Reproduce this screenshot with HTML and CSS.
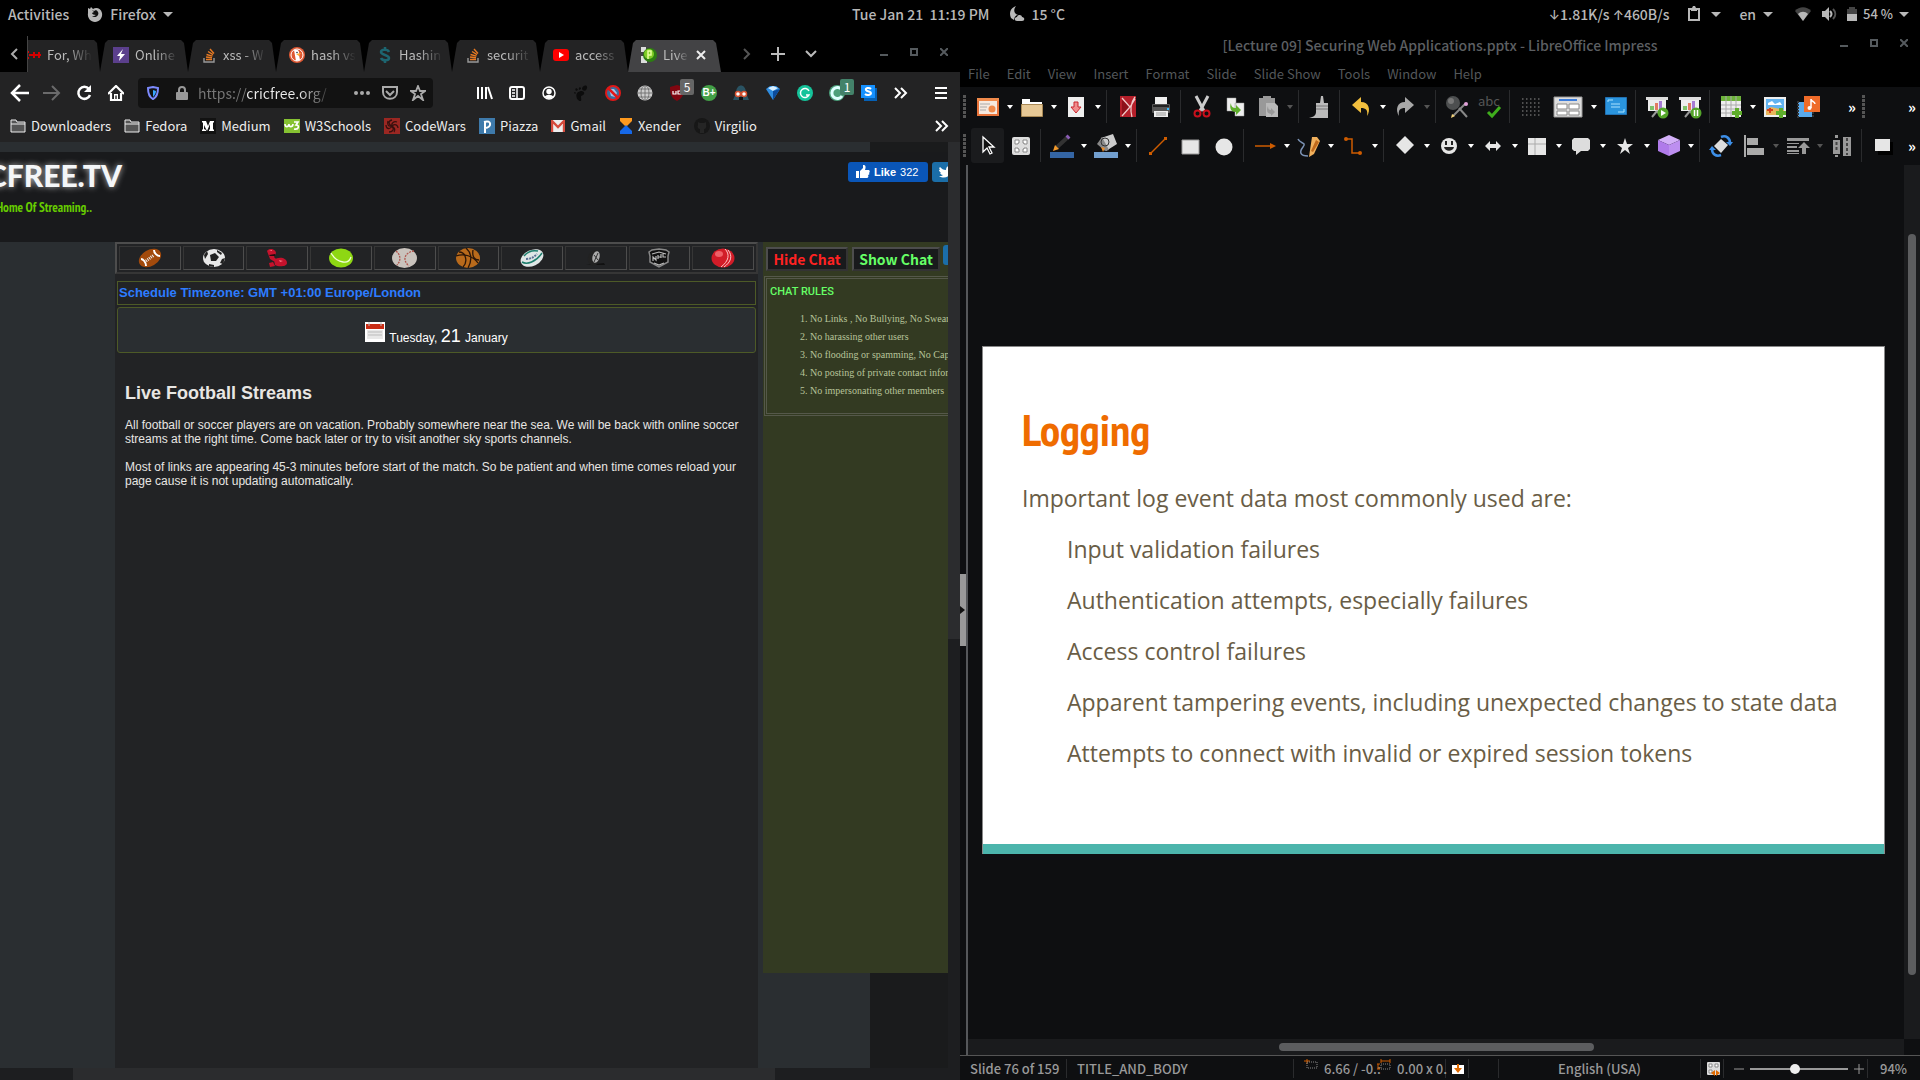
FILE: index.html
```html
<!DOCTYPE html>
<html lang="en">
<head>
<meta charset="utf-8">
<title>Desktop</title>
<link rel="stylesheet" href="styles.css">
</head>
<body>
<header class="panel">
  <div class="panel-side">
    <button class="panel-btn">Activities</button>
    <button class="panel-btn app-menu"><svg width="16" height="16" viewBox="0 0 16 16"><path fill="#b8b8b8" d="M1 2l2 1 1-2 2 2c3-2 8-1 9 4 1 5-3 9-7 9S0 12 1 7z"/><path fill="#111" d="M5 4c1 0 1 1 2 1l2-1c2 1 3 3 2 5s-4 3-6 1l2 0c1 0 1-1 2-1-2 0-4-1-4-2l2-1z"/></svg>Firefox<i class="tri"></i></button>
  </div>
  <div class="panel-mid"><span>Tue Jan 21 &nbsp;11:19 PM</span><svg width="16" height="16" viewBox="0 0 16 16"><path fill="#b8b8b8" d="M5 1C1 3 0 8 2 12l3 2c0-3 2-5 4-5C5 8 4 4 7 0zM8 15c-3 0-3-4 0-4 1-3 5-2 5 0 3 0 3 4 0 4z"/></svg><span class="temp">15 °C</span></div>
  <div class="panel-side panel-right">
    <span><span class="arrow">↓</span>1.81K/s <span class="arrow">↑</span>460B/s</span>
    <button class="panel-btn clip"><svg width="14" height="16" viewBox="0 0 14 16"><path fill="none" stroke="#b8b8b8" stroke-width="2" d="M2 3h10v11H2z"/><path fill="#b8b8b8" d="M4 2h1l1-2h2l1 2h1v3H4z"/></svg><i class="tri"></i></button>
    <button class="panel-btn lang">en<i class="tri"></i></button>
    <button class="panel-btn sys"><svg width="16" height="14" viewBox="0 0 16 14"><path fill="#444" d="M0 4c4-5 12-5 16 0l-8 10z"/><path fill="#b8b8b8" d="M3 7c3-3 7-3 10 0l-5 7z"/></svg><svg width="16" height="14" viewBox="0 0 16 14"><path fill="#b8b8b8" d="M1 4h3l4-4v14l-4-4H1z"/><path fill="none" stroke="#b8b8b8" stroke-width="2" d="M9 4c2 2 2 4 0 6"/><path fill="none" stroke="#555" stroke-width="2" d="M12 2c3 3 3 7 0 10"/></svg><svg width="10" height="14" viewBox="0 0 10 14"><path fill="#444" d="M2 0h6v2h2v5H0V2h2z"/><path fill="#b8b8b8" d="M0 7h10v7H0z"/></svg><span>54 %</span><i class="tri"></i></button>
  </div>
</header>

<main class="desk">
<section class="browser" aria-label="Firefox">
  <div class="tabbar">
    <button class="tab-scroll" aria-label="Scroll left"><svg width="8" height="12" viewBox="0 0 8 12"><path d="M7 1L2 6l5 5" fill="none" stroke="#aaa" stroke-width="2"/></svg></button>
    <div class="tabs">
      <button class="tab tab-cut"><svg width="14" height="16" viewBox="0 0 14 16"><path stroke="#d40000" stroke-width="2" d="M3 8h10M6 5v6M11 5v6M0 4v2M0 10v2M2 7v2"/></svg><span>For, Wh</span></button>
      <button class="tab"><svg width="16" height="16" viewBox="0 0 16 16"><path fill="#5b3f8c" d="M0 0h16v16H0z"/><path fill="#fff" d="M10 2L4 9h3l-1 5 6-7H8z"/></svg><span>Online</span></button>
      <button class="tab"><svg width="16" height="16" viewBox="0 0 16 16"><path fill="none" stroke="#999" stroke-width="1.4" d="M3 11v4h10v-4"/><path stroke="#e87a22" stroke-width="1.4" d="M5 12.500h6M5 10l6 .7M5.500 7.500l6 1.700M7 4.500l5 3.200M9 2l4 4.500"/></svg><span>xss - W</span></button>
      <button class="tab"><svg width="16" height="16" viewBox="0 0 16 16"><circle cx="8" cy="8" r="8" fill="#de5833"/><circle cx="8" cy="8" r="6" fill="none" stroke="#fff"/><path fill="#fff" d="M5 3c4-1 6 1 5 5l1 5-4 1z"/><path fill="#fa3" d="M7 7l5-1-2 3z"/><circle cx="8" cy="5.500" r=".8" fill="#234"/></svg><span>hash vs</span></button>
      <button class="tab"><svg width="16" height="16" viewBox="0 0 16 16"><path fill="none" stroke="#1d6570" stroke-width="2.500" d="M12 5C11 2 4 2 4 5s8 3 8 6-7 3-8 0M8 0v3M8 13v3"/></svg><span>Hashin</span></button>
      <button class="tab"><svg width="16" height="16" viewBox="0 0 16 16"><path fill="none" stroke="#999" stroke-width="1.400" d="M3 11v4h10v-4"/><path stroke="#e87a22" stroke-width="1.400" d="M5 12.500h6M5 10l6 .7M5.500 7.500l6 1.700M7 4.500l5 3.200M9 2l4 4.500"/></svg><span>securit</span></button>
      <button class="tab"><svg width="16" height="16" viewBox="0 0 16 16"><rect y="2" width="16" height="12" rx="3" fill="#f00"/><path fill="#fff" d="M6 5l5 3-5 3z"/></svg><span>access</span></button>
      <button class="tab tab-on"><svg width="16" height="16" viewBox="0 0 16 16"><path fill="#ddd" d="M0 0h5v5H0zM0 9h6v7H0z"/><circle cx="9" cy="8" r="7" fill="#2d7d12"/><circle cx="8" cy="7" r="5" fill="#7ecb26"/><path fill="none" stroke="#e6ff9c" stroke-width="1.500" d="M7 12V4h3v4H7"/></svg><span>Live</span><svg class="x" width="10" height="10" viewBox="0 0 10 10"><path d="M1 1l8 8M9 1L1 9" stroke="#eee" stroke-width="2"/></svg></button>
    </div>
    <div class="tab-tools">
      <svg width="8" height="12" viewBox="0 0 8 12"><path d="M1 1l5 5-5 5" fill="none" stroke="#555" stroke-width="2"/></svg>
      <svg width="14" height="14" viewBox="0 0 14 14"><path d="M7 0v14M0 7h14" stroke="#bbb" stroke-width="2"/></svg>
      <svg width="12" height="8" viewBox="0 0 12 8"><path d="M1 1l5 5 5-5" fill="none" stroke="#bbb" stroke-width="2"/></svg>
    </div>
    <div class="wm">
      <svg width="8" height="8" viewBox="0 0 8 8"><path d="M0 7h8" stroke="#555a5e" stroke-width="2"/></svg>
      <svg width="8" height="8" viewBox="0 0 8 8"><path d="M1 1h6v6H1z" fill="none" stroke="#555a5e" stroke-width="2"/></svg>
      <svg width="8" height="8" viewBox="0 0 8 8"><path d="M0 0l8 8M8 0L0 8" stroke="#555a5e" stroke-width="2"/></svg>
    </div>
  </div>

  <div class="navbar">
    <button class="nb" aria-label="Back"><svg width="20" height="18" viewBox="0 0 20 18"><path d="M19 9H3M10 1L2 9l8 8" fill="none" stroke="#fff" stroke-width="2.500"/></svg></button>
    <button class="nb" aria-label="Forward"><svg width="18" height="16" viewBox="0 0 18 16"><path d="M0 8h16M9 1l7 7-7 7" fill="none" stroke="#6a6a6b" stroke-width="2"/></svg></button>
    <button class="nb" aria-label="Reload"><svg width="16" height="16" viewBox="0 0 16 16"><path d="M13 4a6 6 0 1 0 1 6" fill="none" stroke="#fff" stroke-width="2.500"/><path fill="#fff" d="M15 0v7H8z"/></svg></button>
    <button class="nb" aria-label="Home"><svg width="16" height="16" viewBox="0 0 16 16"><path d="M0 9l8-8 8 8M3 8v7h10V8" fill="none" stroke="#fff" stroke-width="2.200"/><path fill="#fff" d="M6 9h4v6H6z"/><path fill="#222" d="M7.300 10.500h1.400V14H7.300z"/></svg></button>
    <div class="urlbox">
      <svg width="12" height="14" viewBox="0 0 12 14"><path d="M1 2l5-1 5 1c0 6-1 9-5 11C2 11 1 8 1 2z" fill="none" stroke="#7d8bff" stroke-width="2"/><path fill="#38a6ff" d="M6 4v7c2-2 3-4 3-6z"/></svg>
      <svg class="lock" width="12" height="14" viewBox="0 0 12 14"><rect y="6" width="12" height="8" rx="1" fill="#999"/><path d="M3 7V4a3 3 0 0 1 6 0v3" fill="none" stroke="#999" stroke-width="2"/></svg>
      <input class="url" aria-label="Address" value="https://cricfree.org/">
      <svg width="16" height="4" viewBox="0 0 16 4"><circle cx="2" cy="2" r="2" fill="#aaa"/><circle cx="8" cy="2" r="2" fill="#aaa"/><circle cx="14" cy="2" r="2" fill="#aaa"/></svg>
      <svg width="16" height="14" viewBox="0 0 16 14"><path d="M1 1h14v5c0 9-14 9-14 0z" fill="none" stroke="#aaa" stroke-width="2"/><path d="M4 5l4 4 4-4" fill="none" stroke="#aaa" stroke-width="2"/></svg>
      <svg width="16" height="16" viewBox="0 0 16 16"><path d="M8 1l2 5h5l-4 3 2 6-5-4-5 4 2-6-4-3h5z" fill="none" stroke="#aaa" stroke-width="1.800"/></svg>
    </div>
    <button class="nb" aria-label="Library"><svg width="16" height="16" viewBox="0 0 16 16"><path d="M1 2v12M5 2v12M9 2v12M11 2l4 12" stroke="#fff" stroke-width="2"/></svg></button>
    <button class="nb" aria-label="Sidebar"><svg width="16" height="14" viewBox="0 0 16 14"><rect x="1" y="1" width="14" height="12" rx="2" fill="none" stroke="#fff" stroke-width="2"/><path d="M8 1v12M3 4h3M3 7h3M3 10h3" stroke="#fff" stroke-width="1.500"/></svg></button>
    <button class="nb" aria-label="Account"><svg width="14" height="14" viewBox="0 0 14 14"><circle cx="7" cy="7" r="6" fill="none" stroke="#fff" stroke-width="1.500"/><circle cx="7" cy="5.500" r="2.700" fill="#fff"/><path fill="#fff" d="M2.500 11c2-3 7-3 9 0l-4.500 2z"/></svg></button>
    <button class="nb" aria-label="GNOME"><svg width="14" height="16" viewBox="0 0 14 16"><path fill="#0c0c0c" d="M3 8c5-4 8-1 7 1s-3 1-3 3 1 4-1 4-5-4-3-8zM8 4c0-4 6-5 5-1s-4 3-5 1zM5 5c-1-3 2-4 2-1zM2 6c-2-3 1-4 2-1zM1 9c-2-2 0-3 1-1z"/></svg></button>
    <button class="nb" aria-label="Blocker"><svg width="16" height="16" viewBox="0 0 16 16"><circle cx="8" cy="8" r="7" fill="#3b6d9c"/><path fill="#9fc4e8" d="M4 4h5l3 4-2 4-4-1z"/><circle cx="8" cy="8" r="7" fill="none" stroke="#e01818" stroke-width="2"/><path d="M3 3l10 10" stroke="#e01818" stroke-width="2.500"/></svg></button>
    <button class="nb" aria-label="Globe"><svg width="16" height="16" viewBox="0 0 16 16"><circle cx="8" cy="8" r="7.500" fill="#ccc"/><path d="M8 0v16M0 8h16M2 4h12M2 12h12" stroke="#666" stroke-width=".8"/><ellipse cx="8" cy="8" rx="4" ry="7.500" fill="none" stroke="#666" stroke-width=".8"/></svg></button>
    <button class="nb" aria-label="uBlock"><svg width="16" height="16" viewBox="0 0 16 16"><path fill="#800610" d="M8 0l7 2c0 7-1 11-7 14C2 13 1 9 1 2z"/><path d="M4 6v3h3V6M9 6h3v3H9z" fill="none" stroke="#fff" stroke-width="1.200"/></svg><b class="badge">5</b></button>
    <button class="nb" aria-label="Boost"><span class="round green">B+</span></button>
    <button class="nb" aria-label="Vader"><svg width="16" height="16" viewBox="0 0 16 16"><path fill="#2a5363" d="M3 8c0-10 10-10 10 0l3 7H0z"/><circle cx="5" cy="9" r="2.500" fill="#fff" stroke="#d4502f" stroke-width="1.500"/><circle cx="11" cy="9" r="2.500" fill="#fff" stroke="#d4502f" stroke-width="1.500"/><path fill="#111" d="M6 12h4v3H6z"/></svg></button>
    <button class="nb" aria-label="Gem"><svg width="14" height="16" viewBox="0 0 14 16"><path fill="#2f8de0" d="M0 4l4-3h6l4 3-7 11z"/><path fill="#d8efff" d="M2 3l5-2 5 2-5 3z"/><path fill="#0c4c9c" d="M7 6l7-2-7 11z"/></svg></button>
    <button class="nb" aria-label="Grammarly"><svg width="16" height="16" viewBox="0 0 16 16"><circle cx="8" cy="8" r="8" fill="#15c39a"/><path d="M12 6a4.500 4.500 0 1 0 0 4H9" fill="none" stroke="#fff" stroke-width="1.500"/></svg></button>
    <button class="nb" aria-label="Refresh"><svg width="16" height="16" viewBox="0 0 16 16"><circle cx="8" cy="8" r="8" fill="#4c9f7b"/><path d="M13 5a5.500 5.500 0 1 0 0 6" fill="none" stroke="#dff" stroke-width="3"/></svg><b class="badge teal">1</b></button>
    <button class="nb" aria-label="Stylish"><svg width="16" height="16" viewBox="0 0 16 16"><path fill="#0560b5" d="M3 3h13v13H3z"/><path fill="#1591ff" d="M0 0h14v13H0z"/><path d="M10 4C8 2 4 3 5 5s5 1 5 3-4 3-6 1" fill="none" stroke="#fff" stroke-width="2"/></svg></button>
    <button class="nb" aria-label="More tools"><svg width="14" height="12" viewBox="0 0 14 12"><path d="M1 1l5 5-5 5M7 1l5 5-5 5" fill="none" stroke="#fff" stroke-width="2"/></svg></button>
    <button class="nb menu" aria-label="Menu"><svg width="12" height="12" viewBox="0 0 12 12"><path d="M0 1h12M0 6h12M0 11h12" stroke="#fff" stroke-width="2"/></svg></button>
  </div>

  <nav class="bookmarks">
    <a href="#"><svg width="16" height="14" viewBox="0 0 16 14"><path d="M1 13V1h5l1 2h8v10zM1 5h14" fill="#555" stroke="#eee"/></svg>Downloaders</a>
    <a href="#"><svg width="16" height="14" viewBox="0 0 16 14"><path d="M1 13V1h5l1 2h8v10zM1 5h14" fill="#555" stroke="#eee"/></svg>Fedora</a>
    <a href="#"><svg width="16" height="16" viewBox="0 0 16 16"><path fill="#121212" d="M0 0h16v16H0z"/><path fill="#fff" d="M2 3h4l2 5 2-5h4v1l-1 1v6l1 1v1H9v-1l1-1V6l-3 7-3-6v4l2 1v1H2v-1l1-1V5L2 4z"/></svg>Medium</a>
    <a href="#"><svg width="16" height="14" viewBox="0 0 16 14"><path fill="#86c232" d="M0 0h16v14H0z"/><path d="M1 5c0 4 4 3 4 0 0 4 4 3 4 0M10 3h4l-2 3c4 0 3 5-2 4" fill="none" stroke="#fff" stroke-width="1.600"/></svg>W3Schools</a>
    <a href="#"><svg width="16" height="16" viewBox="0 0 16 16"><path fill="#9b2722" d="M0 0h16v16H0z"/><path d="M8 8C4 6 4 3 8 2M8 8c4-3 6 0 6 2M8 8c3 4 0 6-3 6M8 8c-2 4-6 3-6-1M8 8c-1-3 2-5 5-4M8 8c2 1 4 4 2 6M8 8c-4 1-5-2-4-5" fill="none" stroke="#35100e" stroke-width="1.300"/></svg>CodeWars</a>
    <a href="#"><svg width="16" height="16" viewBox="0 0 16 16"><path fill="#3e7aab" d="M0 0h16v16H0z"/><path d="M6 15V3M5 4c8-3 8 6 1 6" fill="none" stroke="#fff" stroke-width="2"/></svg>Piazza</a>
    <a href="#"><svg width="14" height="12" viewBox="0 0 14 12"><path fill="#eee" d="M0 0h14v12H0z"/><path d="M1 12V1l6 6 6-6v11" fill="none" stroke="#d54b3d" stroke-width="2.400"/></svg>Gmail</a>
    <a href="#"><svg width="14" height="16" viewBox="0 0 14 16"><path fill="#ff9a1e" d="M1 0h12v3L7 9 1 3z"/><path fill="#1668e8" d="M7 7l6 6v3H1v-3z"/></svg>Xender</a>
    <a href="#"><svg width="16" height="16" viewBox="0 0 16 16"><circle cx="8" cy="8" r="8" fill="#171717"/><path fill="#252525" d="M4 4l2 1h4l2-1v3c1 3-1 4-2 4v4H6v-4c-2 0-3-2-2-4z"/></svg>Virgilio</a>
    <button class="nb bm-more" aria-label="More bookmarks"><svg width="14" height="12" viewBox="0 0 14 12"><path d="M1 1l5 5-5 5M7 1l5 5-5 5" fill="none" stroke="#fff" stroke-width="2"/></svg></button>
  </nav>

  <div class="view">
    <div class="site">
      <header class="site-head">
        <div class="brand"><div class="logo">CRICFREE.TV</div><div class="tagline">Home Of Streaming..</div></div>
        <div class="social">
          <button class="like"><svg width="14" height="14" viewBox="0 0 14 14"><path fill="#fff" d="M0 6h3v7H0zM4 6l3-3V0c3 0 3 2 2 5h4c1 1 1 2 0 3 1 1 0 2-1 2 1 1 0 3-1 3H4z"/></svg><b>Like</b> 322</button>
          <button class="tw" aria-label="Tweet"><svg width="14" height="12" viewBox="0 0 14 12"><path fill="#fff" d="M0 10c2 0 3 0 4-1-2 0-2-1-3-2h1C1 6 0 5 0 4h1C0 3 0 2 1 1c2 2 3 3 6 3 0-4 3-5 5-3l2-1-1 2c0 8-7 12-13 8z"/></svg></button>
        </div>
      </header>
      <div class="site-body">
        <div class="content">
          <nav class="sports">
            <a href="#" aria-label="American football"><svg width="24" height="20" viewBox="0 0 24 20"><ellipse cx="12" cy="10" rx="12" ry="8" transform="rotate(-30 12 10)" fill="#a24a0c"/><path d="M3 11c2 0 5 3 5 7M16 2c0 3 3 6 6 6" fill="none" stroke="#fff" stroke-width="2"/><path d="M8 13l8-6" stroke="#eee" stroke-width="3" stroke-dasharray="1 1"/></svg></a>
            <a href="#" aria-label="Football"><svg width="24" height="20" viewBox="0 0 24 20"><ellipse cx="12" cy="10" rx="11" ry="9" fill="#e8e8e8"/><path fill="#222" d="M8 7l5-2 4 4-3 4H9zM2 7l3-4 1 3-3 5zM15 2l5 3-1 2-4-3zM20 11l3-1-2 6-3-1zM7 16l5 1v2L7 18z"/></svg></a>
            <a href="#" aria-label="Boxing"><svg width="24" height="20" viewBox="0 0 24 20"><path fill="#c5122c" d="M2 3c3-4 9-1 9 2L9 9l3 3-2 2-5-3zM9 12c5-4 13-2 13 3 0 4-9 4-12 2zM4 15l4-1 2 4-5 1z"/><path fill="#260a0d" d="M4 7l6-1v2H5z"/><path fill="#ff7383" d="M4 3l3-1v1zM14 12l4 1-3 1z"/></svg></a>
            <a href="#" aria-label="Tennis"><svg width="24" height="20" viewBox="0 0 24 20"><ellipse cx="12" cy="10" rx="12" ry="9.500" fill="#8ed713"/><path d="M2 5c2 3 4 8 12 9 5 1 7-2 8-5" fill="none" stroke="#f2ffd6" stroke-width="1.300"/></svg></a>
            <a href="#" aria-label="Baseball"><svg width="25" height="20" viewBox="0 0 25 20"><ellipse cx="12.500" cy="10" rx="12.500" ry="10" fill="#c9c3bd"/><path d="M4 3c5 4 5 10 1 14M22 3c-8 1-13 8-5 15" fill="none" stroke="#b0564e" stroke-width="1.300" stroke-dasharray="2 1"/></svg></a>
            <a href="#" aria-label="Basketball"><svg width="24" height="20" viewBox="0 0 24 20"><ellipse cx="12" cy="10" rx="12" ry="10" fill="#b96a1b"/><path d="M0 8c8-3 17 0 22 7M10 0c6 5 6 13 2 20M3 4c7 0 9 10 4 15M17 2c-1 6 1 10 6 10" fill="none" stroke="#2b1608" stroke-width="1.300"/></svg></a>
            <a href="#" aria-label="Rugby"><svg width="24" height="20" viewBox="0 0 24 20"><ellipse cx="12" cy="10" rx="12" ry="8" transform="rotate(-25 12 10)" fill="#dfe6e6"/><path d="M2 14c5 3 14 0 20-9M4 8c4-5 9-6 14-5" fill="none" stroke="#1c7d6c" stroke-width="1.500"/><path d="M6 11c5 0 8-2 11-5" stroke="#5a6f94" stroke-width="2" stroke-dasharray="2 1" fill="none"/></svg></a>
            <a href="#" aria-label="Motor sport"><svg width="24" height="20" viewBox="0 0 24 20"><path fill="#111" d="M2 17l18-2 1 2z"/><ellipse cx="10" cy="10" rx="6" ry="8" transform="rotate(15 10 10)" fill="#222"/><ellipse cx="12" cy="9" rx="3.500" ry="6" transform="rotate(15 12 9)" fill="#aaa"/><path d="M10 7l4 5M14 5l-4 9" stroke="#333"/></svg></a>
            <a href="#" aria-label="Hockey"><svg width="24" height="20" viewBox="0 0 24 20"><path d="M12 1l7 1 3 2-1 4v6l-9 5-9-5V8L2 4l3-2z" fill="#111" stroke="#888" stroke-width="1.500"/><path d="M5 6l7-2 7 2M6 13V9l3 3V8M11 11V7M11 9h3M14 10V6M16 5v4h3M7 15l5 2 5-2" stroke="#bbb" stroke-width="1.200" fill="none"/></svg></a>
            <a href="#" aria-label="Cricket"><svg width="24" height="20" viewBox="0 0 24 20"><ellipse cx="12" cy="10" rx="11.500" ry="9.500" fill="#d21c28"/><path d="M14 1c5 5 4 12-4 18M17 2c5 6 3 12-4 17" fill="none" stroke="#ffc6c6"/><ellipse cx="8" cy="6" rx="4" ry="3" fill="#ef6068"/></svg></a>
          </nav>
          <div class="zone">Schedule Timezone: GMT +01:00 Europe/London</div>
          <div class="date"><svg width="20" height="20" viewBox="0 0 20 20"><path fill="#fff" d="M0 0h20v20H0z"/><path fill="#c92d15" d="M1 2h18v5H1z"/><path fill="#e8e8e8" d="M2 8h16v9H2z"/><path d="M4 0v4M16 0v4M3 10h14M3 13h14" stroke="#bbb"/></svg><span>Tuesday, <span class="day">21</span> January</span></div>
          <article class="streams">
            <h1>Live Football Streams</h1>
            <p>All football or soccer players are on vacation. Probably somewhere near the sea. We will be back with online soccer streams at the right time. Come back later or try to visit another sky sports channels.</p>
            <p>Most of links are appearing 45-3 minutes before start of the match. So be patient and when time comes reload your page cause it is not updating automatically.</p>
          </article>
        </div>
        <aside class="chat">
          <div class="chat-btns"><button class="hide">Hide Chat</button><button class="show">Show Chat</button><i class="chip"></i></div>
          <div class="rules">
            <h2>CHAT RULES</h2>
            <ol>
              <li>No Links , No Bullying, No Swearing</li>
              <li>No harassing other users</li>
              <li>No flooding or spamming, No Caps</li>
              <li>No posting of private contact information</li>
              <li>No impersonating other members</li>
            </ol>
          </div>
        </aside>
      </div>
    </div>
    <div class="vbar"><i></i></div>
    <div class="hbar"><i></i></div>
  </div>
</section>

<section class="impress" aria-label="LibreOffice Impress">
  <div class="titlebar"><h2>[Lecture 09] Securing Web Applications.pptx - LibreOffice Impress</h2>
    <div class="wm">
      <svg width="8" height="8" viewBox="0 0 8 8"><path d="M0 7h8" stroke="#555a5e" stroke-width="2"/></svg>
      <svg width="8" height="8" viewBox="0 0 8 8"><path d="M1 1h6v6H1z" fill="none" stroke="#555a5e" stroke-width="2"/></svg>
      <svg width="8" height="8" viewBox="0 0 8 8"><path d="M0 0l8 8M8 0L0 8" stroke="#555a5e" stroke-width="2"/></svg>
    </div>
  </div>
  <nav class="menubar"><button>File</button><button>Edit</button><button>View</button><button>Insert</button><button>Format</button><button>Slide</button><button>Slide Show</button><button>Tools</button><button>Window</button><button>Help</button></nav>

  <div class="toolbar">
    <i class="grip"></i>
    <button class="tb" aria-label="New"><svg viewBox="0 0 24 24"><path fill="#f6e9df" stroke="#e8743b" stroke-width="2" d="M2 4h20v16H2z"/><path fill="#f08a4b" d="M1 3h22v3H1z"/><path d="M4 9h10M4 12h7M4 15h6" stroke="#aaa"/><circle cx="16" cy="14" r="3.500" fill="#f08a4b"/></svg></button><button class="car" aria-label="New options"></button>
    <button class="tb" aria-label="Open"><svg viewBox="0 0 24 24"><path fill="#fff" d="M2 4h8v3h12v4H2z"/><path fill="#e6c896" stroke="#a98955" d="M1.500 9.500h21v12h-21z"/></svg></button><button class="car" aria-label="Open options"></button>
    <button class="tb" aria-label="Save"><svg viewBox="0 0 24 24"><path fill="#eee" d="M4 2h16v20H4z"/><path fill="#f08c8c" stroke="#c9252d" d="M10 7h4v5h3l-5 6-5-6h3z"/></svg></button><button class="car" aria-label="Save options"></button>
    <i class="sep"></i>
    <button class="tb" aria-label="Export PDF"><svg viewBox="0 0 24 24"><path fill="#b51f2a" d="M4 1h16v21H4z"/><path fill="#8e1019" d="M6 5l9 7-9 8z"/><path d="M6 3l8 9-8 9M19 2c-5 7-5 13-3 20M14 12l5-8" stroke="#f0c9c9" stroke-width="1.300" fill="none"/></svg></button>
    <button class="tb" aria-label="Print"><svg viewBox="0 0 24 24"><path fill="#eee" d="M6 2h12v7H6z"/><rect x="3" y="9" width="18" height="9" rx="1" fill="#555"/><path fill="#222" d="M4 10h16v2H4z"/><path fill="#3bf" d="M18 13h2v2h-2z"/><path fill="#eee" d="M5 16h14v6H5z"/><path d="M7 18h10M7 20h10" stroke="#999"/></svg></button>
    <i class="sep"></i>
    <button class="tb" aria-label="Cut"><svg viewBox="0 0 24 24"><path d="M6 1l8 15M18 1l-8 15" stroke="#ccc" stroke-width="3"/><circle cx="7.500" cy="18.500" r="3" fill="none" stroke="#c8101c" stroke-width="2"/><circle cx="16.500" cy="18.500" r="3" fill="none" stroke="#c8101c" stroke-width="2"/></svg></button>
    <button class="tb" aria-label="Copy"><svg viewBox="0 0 24 24"><path fill="#eee" stroke="#999" stroke-width=".5" d="M4 3h9v13H4zM12 8h9v13h-9z"/><path fill="#5fae2c" d="M8 8c0 4 2 5 5 5v-3l5 5-5 5v-3c-5 0-7-4-5-9z"/></svg></button>
    <button class="tb" aria-label="Paste"><svg viewBox="0 0 24 24"><path fill="#999" d="M3 3h4V1h8v2h4v18H3z"/><path fill="#b9b9b9" d="M10 8h9l3 3v11H10z"/><path fill="#999" d="M12 11c0 3 1 4 3 4v-2l4 4-4 4v-2c-4 0-5-4-3-8z"/></svg></button><button class="car dim" aria-label="Paste options"></button>
    <i class="sep"></i>
    <button class="tb" aria-label="Clone formatting"><svg viewBox="0 0 24 24"><path fill="#bbb" d="M13 1h2l1 7h4v15H1c5-1 7-3 7-6V8h4z"/><path d="M8 11h12M8 14h12" stroke="#777"/></svg></button>
    <i class="sep"></i>
    <button class="tb" aria-label="Undo"><svg viewBox="0 0 24 24"><path fill="#f2bf3e" d="M3 10l9-8v5c8 0 10 8 6 14 1-6-1-8-6-8v5z"/></svg></button><button class="car" aria-label="Undo list"></button>
    <button class="tb" aria-label="Redo"><svg viewBox="0 0 24 24"><path fill="#a8a8a8" d="M21 10l-9-8v5c-8 0-10 8-6 14-1-6 1-8 6-8v5z"/></svg></button><button class="car dim" aria-label="Redo list"></button>
    <i class="sep"></i>
    <button class="tb" aria-label="Find"><svg viewBox="0 0 24 24"><circle cx="8" cy="8" r="7" fill="#4d4f50"/><circle cx="6" cy="6" r="3" fill="#777"/><path d="M8 21L20 9" stroke="#888" stroke-width="2"/><path d="M14 13l8 9" stroke="#888" stroke-width="2"/><circle cx="21" cy="9" r="2" fill="#e0a0d8"/><path fill="#f3d27a" d="M6 23l1-4 3 2z"/></svg></button>
    <button class="tb" aria-label="Spelling"><span class="abc">abc</span><svg class="check" viewBox="0 0 24 24"><path d="M10 17l4 4 8-9" fill="none" stroke="#3fae1d" stroke-width="3"/></svg></button>
    <i class="sep"></i>
    <button class="tb" aria-label="Grid"><svg viewBox="0 0 24 24"><path d="M3 4h18M3 8h18M3 12h18M3 16h18M3 20h18" stroke="#666" stroke-width="1.500" stroke-dasharray="1.500 2.500"/></svg></button>
    <button class="tb wide" aria-label="Views"><svg viewBox="0 0 30 24"><path fill="#ddd" stroke="#999" d="M1 2h28v20H1z"/><path fill="#fff" stroke="#888" d="M4 9h10v5H4zM16 9h10v5H16zM4 16h10v4H4zM16 16h10v4H16z"/><path d="M6 5h18" stroke="#3c7ddb" stroke-width="2"/></svg></button><button class="car" aria-label="View options"></button>
    <button class="tb" aria-label="Master slide"><svg viewBox="0 0 24 24"><path fill="#2a94dd" stroke="#2271b3" d="M1.500 2.500h21v17h-21z"/><path d="M4 7V5h5M20 14v3h-6M7 9h9M7 12h9" stroke="#a8e1ff" fill="none"/></svg></button>
    <i class="sep"></i>
    <button class="tb" aria-label="Start presentation"><svg viewBox="0 0 24 24"><path fill="#ddd" d="M1 2h22v3H1z"/><path fill="#eee" d="M3 5h18v11H3z"/><path fill="#7fc36a" d="M5 11h4v4H5z"/><path fill="#e27c62" d="M10 8h3v7h-3z"/><path fill="#a67bd4" d="M14 6h3v9h-3z"/><path d="M12 16l-5 6M12 16l5 6" stroke="#999" stroke-width="2"/><circle cx="18" cy="18" r="5.500" fill="#54a52a"/><path fill="#fff" d="M16 15l5 3-5 3z"/></svg></button>
    <button class="tb" aria-label="Start from current"><svg viewBox="0 0 24 24"><path fill="#ddd" d="M1 2h22v3H1z"/><path fill="#eee" d="M3 5h18v11H3z"/><path fill="#7fc36a" d="M5 11h4v4H5z"/><path fill="#e27c62" d="M10 8h3v7h-3z"/><path fill="#a67bd4" d="M14 6h3v9h-3z"/><path d="M12 16l-5 6M12 16l5 6" stroke="#999" stroke-width="2"/><circle cx="18" cy="18" r="5.500" fill="#54a52a"/><path d="M16.500 15v6M19.500 15v6" stroke="#fff" stroke-width="1.500"/></svg></button>
    <i class="sep"></i>
    <button class="tb" aria-label="Table"><svg viewBox="0 0 24 24"><path fill="#eee" d="M2 1h20v21H2z"/><path fill="#6db33a" d="M2 1h20v5H2z"/><path d="M2 10h20M2 14h20M2 18h20M7 1v21M12 1v21M17 1v21" stroke="#aaa"/><path d="M18 13v10M13 18h10" stroke="#5fae2c" stroke-width="4"/></svg></button><button class="car" aria-label="Table options"></button>
    <button class="tb" aria-label="Image"><svg viewBox="0 0 24 24"><path fill="#62b3f0" stroke="#eee" stroke-width="2" d="M2 3h20v18H2z"/><path fill="#e8b55b" d="M3 15l5-3 13 3v5H3z"/><path fill="#fff" d="M5 8l4-2 3 3 5-2 2 3H5z"/><path d="M7 13v5M4 15h6" stroke="#d5401c" stroke-width="2"/><path d="M18 13v10M13 18h10" stroke="#5fae2c" stroke-width="4"/></svg></button>
    <button class="tb" aria-label="Media"><svg viewBox="0 0 24 24"><path fill="#5aa9ea" d="M2 7h14v15H2z"/><path d="M2 6v17M17 14v9" stroke="#333" stroke-width="2" stroke-dasharray="2 1"/><path fill="#ef6b29" d="M8 1h16v16H8z"/><path d="M15 13V4c0 3 4 2 4 5" fill="none" stroke="#fff" stroke-width="1.500"/><circle cx="13.500" cy="13" r="2" fill="#fff"/></svg></button>
    <span class="more-end"><button class="more" aria-label="More">»</button><i class="grip"></i></span><button class="more" aria-label="More">»</button>
  </div>

  <div class="toolbar">
    <i class="grip"></i>
    <button class="tb on" aria-label="Select"><svg viewBox="0 0 24 24"><path d="M7 3v15l4-4 3 6 2-1-3-6h5z" fill="#111" stroke="#fff" stroke-width="1.300"/></svg></button>
    <button class="tb" aria-label="Zoom"><svg viewBox="0 0 24 24"><rect x="3" y="3" width="18" height="18" rx="2" fill="#ddd"/><path d="M6 10V6h4v3H9v1zM14 6h4v4h-3V9h-1zM6 14h3v1h1v3H6zM15 14h3v4h-4v-3h1z" fill="#fff" stroke="#888"/></svg></button>
    <i class="sep"></i>
    <button class="tb" aria-label="Line color"><svg viewBox="0 0 24 24"><path fill="#3465a4" d="M0 18h24v6H0z"/><path d="M6 14L18 3" stroke="#333" stroke-width="4"/><path d="M17 4l2-2" stroke="#8a5cb5" stroke-width="4"/><path fill="#f39a2b" d="M3 17l2-6 4 4z"/></svg></button><button class="car" aria-label="Line colors"></button>
    <button class="tb" aria-label="Fill color"><svg viewBox="0 0 24 24"><path fill="#729fcf" d="M0 18h24v6H0z"/><path fill="#ccc" d="M7 4l12-4 4 10-11 7z"/><path fill="#888" d="M3 10l5-7 7 13-4 1z"/><circle cx="11" cy="8" r="4" fill="none" stroke="#333"/><path fill="#e88b2b" d="M7 13l4 1-2 4z"/></svg></button><button class="car" aria-label="Fill colors"></button>
    <i class="sep"></i>
    <button class="tb" aria-label="Line"><svg viewBox="0 0 24 24"><path d="M5 19L19 5" stroke="#ce5c00" stroke-width="1.500"/><path fill="#ce5c00" d="M3 18h3v3H3zM18 3h3v3h-3z"/></svg></button>
    <button class="tb" aria-label="Rectangle"><svg viewBox="0 0 24 24"><path fill="#e6e6e6" stroke="#999" d="M3 6h17v14H3z"/></svg></button>
    <button class="tb" aria-label="Ellipse"><svg viewBox="0 0 24 24"><circle cx="12" cy="13" r="8.500" fill="#e6e6e6"/></svg></button>
    <i class="sep"></i>
    <button class="tb" aria-label="Arrow"><svg viewBox="0 0 24 24"><path d="M2 12h16" stroke="#ce5c00" stroke-width="1.500"/><path fill="#ce5c00" d="M17 9l6 3-6 3z"/></svg></button><button class="car" aria-label="Arrows"></button>
    <button class="tb" aria-label="Curve"><svg viewBox="0 0 24 24"><path d="M1 5c2 5 9 3 5 8s-3 9 5 9" fill="none" stroke="#7c93b5" stroke-width="1.500"/><path fill="#f0b05c" d="M15 3l5 0 3 4-6 13-5 3 1-7z"/><path fill="#c06a1c" d="M19 6l3 2-6 10-2-1z"/></svg></button><button class="car" aria-label="Curves"></button>
    <button class="tb" aria-label="Connector"><svg viewBox="0 0 24 24"><path d="M5 5h6v14h7" fill="none" stroke="#ce5c00" stroke-width="1.500"/><circle cx="5" cy="5" r="2" fill="#ce5c00"/><circle cx="19" cy="19" r="2" fill="#ce5c00"/></svg></button><button class="car" aria-label="Connectors"></button>
    <i class="sep"></i>
    <button class="tb" aria-label="Diamond"><svg viewBox="0 0 24 24"><path fill="#e6e6e6" d="M12 2l9 9-9 9-9-9z"/></svg></button><button class="car" aria-label="Basic shapes"></button>
    <button class="tb" aria-label="Smiley"><svg viewBox="0 0 24 24"><circle cx="12" cy="12" r="8" fill="#e6e6e6"/><path fill="#222" d="M8 7h2v4H8zM14 7h2v4h-2zM7 13h10c-1 5-9 5-10 0z"/></svg></button><button class="car" aria-label="Symbols"></button>
    <button class="tb" aria-label="Double arrow"><svg viewBox="0 0 24 24"><path fill="#e6e6e6" d="M4 12l5-5v3h6V7l5 5-5 5v-3H9v3z"/></svg></button><button class="car" aria-label="Block arrows"></button>
    <button class="tb" aria-label="Flowchart"><svg viewBox="0 0 24 24"><path fill="#e6e6e6" d="M3 4h18v17H3z"/><path d="M10 4v17M3 10h18" stroke="#aaa"/></svg></button><button class="car" aria-label="Flowcharts"></button>
    <button class="tb" aria-label="Callout"><svg viewBox="0 0 24 24"><path fill="#ddd" d="M5 4h14l2 2v9l-2 2h-7l-5 4v-4H5l-2-2V6z"/></svg></button><button class="car" aria-label="Callouts"></button>
    <button class="tb" aria-label="Star"><svg viewBox="0 0 24 24"><path fill="#e6e6e6" d="M12 4l2 6h6l-5 4 2 6-5-4-5 4 2-6-5-4h6z"/></svg></button><button class="car" aria-label="Stars"></button>
    <button class="tb" aria-label="3D objects"><svg viewBox="0 0 24 24"><path fill="#d3b0f8" d="M12 1l11 5-11 5L1 6z"/><path fill="#b07bea" d="M1 6l11 5v11L1 17z"/><path fill="#bd8ff0" d="M23 6l-11 5v11l11-5z"/></svg></button><button class="car" aria-label="3D options"></button>
    <i class="sep"></i>
    <button class="tb" aria-label="Rotate"><svg viewBox="0 0 24 24"><path fill="#ddd" d="M12 5l7 6-7 8-7-7z"/><path d="M12 3c5-2 9 1 9 6M12 21c-5 2-9-1-9-6" fill="none" stroke="#3d8fe8" stroke-width="2.500"/><path fill="#3d8fe8" d="M17 8h7l-3 4zM0 16h7l-4-4z"/></svg></button>
    <button class="tb" aria-label="Align"><svg viewBox="0 0 24 24"><path fill="#aaa" d="M2 1h2v22H2zM5 4h11v7H5zM5 14h17v7H5z"/></svg></button><button class="car dim" aria-label="Align options"></button>
    <button class="tb" aria-label="Arrange"><svg viewBox="0 0 24 24"><path fill="#999" d="M1 4h22v3H1zM1 9h12v1H1zM1 12h10v2H1zM1 16h12v2H1zM1 19h12v1H1zM18 8l6 6h-4v6h-4v-6h-4z"/></svg></button><button class="car dim" aria-label="Arrange options"></button>
    <button class="tb" aria-label="Distribute"><svg viewBox="0 0 24 24"><path fill="#999" d="M3 6h7v14H3zM13 3h8v19h-8zM5 1h3v3H5zM5 21h3v2H5z"/><path d="M6.500 8v10M17 4v17" stroke="#444" stroke-width="2" stroke-dasharray="3 2"/></svg></button>
    <i class="sep"></i>
    <button class="tb" aria-label="Shadow"><svg viewBox="0 0 24 24"><path fill="#000" d="M7 8h15v13H7z"/><path fill="#e6e6e6" d="M4 5h15v12H4z"/></svg></button>
    <button class="more last" aria-label="More">»</button>
  </div>

  <div class="work">
    <div class="split"><i></i></div>
    <div class="canvas">
      <article class="slide">
        <h1>Logging</h1>
        <p>Important log event data most commonly used are:</p>
        <ul>
          <li>Input validation failures</li>
          <li>Authentication attempts, especially failures</li>
          <li>Access control failures</li>
          <li>Apparent tampering events, including unexpected changes to state data</li>
          <li>Attempts to connect with invalid or expired session tokens</li>
        </ul>
      </article>
    </div>
    <div class="lo-vbar"><i></i></div>
    <div class="lo-hbar"><i></i></div>
  </div>

  <footer class="status">
    <span>Slide 76 of 159</span>
    <span>TITLE_AND_BODY</span>
    <span class="pos"><svg width="14" height="12" viewBox="0 0 14 12"><path d="M3 0v5M0 2h6" stroke="#ce5c00"/><path fill="none" stroke="#888" stroke-dasharray="1 1" d="M3 3h10v6H3z"/></svg><b>6.66 / -0.:</b><svg width="14" height="12" viewBox="0 0 14 12"><path d="M4 2h9M4 0v4M13 0v4M1 5v5M0 5h3M0 10h3" stroke="#ce5c00"/><path fill="none" stroke="#888" stroke-dasharray="1 1" d="M4 5h9v5H4z"/></svg><b>0.00 x 0.</b></span>
    <span class="ic"><svg width="12" height="10" viewBox="0 0 12 10"><path fill="#fff" d="M0 1h12v9H0z"/><path fill="#e06a00" d="M5 0h2v4h3L6 9 2 4h3z"/></svg></span>
    <span></span>
    <span class="ctr">English (USA)</span>
    <span class="ic"><svg width="14" height="14" viewBox="0 0 14 14"><rect width="13" height="13" rx="1" fill="#ddd"/><path d="M2 2h3v3H2zM8 2h3v3H8zM2 8h3v3H2z" fill="#fff" stroke="#888"/><path fill="#e06a00" d="M8 8v6l-4-3zM9 8v6l4-3z"/></svg></span>
    <span class="zoom"><button aria-label="Zoom out"><svg width="10" height="10" viewBox="0 0 10 10"><path d="M0 5h10" stroke="#999"/></svg></button><input type="range" aria-label="Zoom" min="0" max="100" value="45"><button aria-label="Zoom in"><svg width="10" height="10" viewBox="0 0 10 10"><path d="M0 5h10M5 0v10" stroke="#999"/></svg></button></span>
    <span class="pct">94%</span>
  </footer>
</section>
</main>
</body>
</html>
```
FILE: styles.css
```css
* { box-sizing: border-box; }
html, body { height: 100%; margin: 0; }
body {
  display: flex;
  flex-direction: column;
  background: #000;
  color: #eee;
  font: 13px/20px "Noto Sans CJK SC", "Noto Sans", sans-serif;
  overflow: hidden;
}
button { border: 0; padding: 0; margin: 0; background: none; color: inherit; font: inherit; }
a { color: inherit; text-decoration: none; }
svg { display: block; flex: none; }
h1, h2, p, ol, ul { margin: 0; padding: 0; }

/* top panel */
.panel { display: flex; align-items: center; height: 28px; flex: none; padding: 0 11px 0 8px; font-size: 14px; font-weight: 500; color: #b8b8b8; }
.panel-side { flex: 1; display: flex; align-items: center; gap: 18px; }
.panel-right { justify-content: flex-end; gap: 18px; }
.panel-btn { display: flex; align-items: center; }
.panel-mid { display: flex; align-items: center; gap: 20px; }
.panel-mid .temp { margin-left: -14px; }
.app-menu, .lang { gap: 7px; }
.clip, .sys { gap: 10px; }
.sys span { margin: 0 -4px; font-size: 13px; }
.sys { margin-left: 4px; }
.arrow { font-family: "Inter", sans-serif; font-size: 13px; }
.tri { border: 5px solid transparent; border-top-color: #b8b8b8; border-bottom: 0; }

.desk { flex: 1; min-height: 0; display: grid; grid-template-columns: 1fr 1fr; }

/* browser */
.browser { display: flex; flex-direction: column; min-width: 0; background: #232324; }
.tabbar { display: flex; height: 44px; flex: none; padding-top: 8px; background: #000; }
.tab-scroll { width: 28px; border-right: 1px solid #444; display: flex; align-items: center; justify-content: center; }
.tabs { display: flex; padding-top: 4px; }
.tab {
  width: 88px; display: flex; align-items: center; gap: 6px; padding: 0 9px 2px 13px;
  background: #232324; color: #bbb;
  clip-path: polygon(0 100%, 5px 3px, 8px 0, 81px 0, 84px 3px, 100% 100%);
}
.tab span { flex: 1; white-space: nowrap; text-align: left; mask-image: linear-gradient(90deg, #000 45%, transparent); }
.tab-cut { width: 72px; padding-left: 0; gap: 5px; clip-path: polygon(0 0, 66px 0, 69px 3px, 100% 100%, 0 100%); }
.tab-on { width: 93px; background: #434345; padding-right: 15px; clip-path: polygon(0 100%, 5px 3px, 8px 0, 85px 0, 88px 3px, 100% 100%); }
.tab-tools { display: flex; align-items: center; gap: 20px; padding-left: 22px; }
.wm { display: flex; align-items: center; gap: 22px; margin-left: auto; padding-right: 12px; padding-bottom: 4px; }

.navbar { display: flex; align-items: center; height: 42px; flex: none; padding: 0 3px 0 4px; }
.nb { position: relative; width: 32px; height: 32px; flex: none; display: flex; align-items: center; justify-content: center; }
.menu { margin-left: 8px; }
.urlbox { flex: 1; min-width: 0; height: 30px; margin: 0 36px 0 6px; padding: 0 7px 0 9px; display: flex; align-items: center; gap: 12px; background: #121212; border-radius: 4px; }
.lock { margin-left: 5px; }
.url {
  flex: 1; min-width: 0; margin-left: -2px; border: 0; padding: 0; font-family: inherit; font-size: 14px;
  color: transparent; background: linear-gradient(90deg, #777 49px, #eee 49px, #eee 100px, transparent 136px); background-clip: text; -webkit-background-clip: text;
}
.badge { position: absolute; top: 2px; right: -1px; width: 14px; height: 16px; border-radius: 2px; background: #666; font-size: 12px; font-weight: 400; line-height: 16px; color: #fff; }
.teal { background: #43826a; }
.round { width: 16px; height: 16px; border-radius: 8px; font: bold 10px/16px "Liberation Sans", sans-serif; color: #fff; }
.green { background: #43a047; }

.bookmarks { display: flex; align-items: center; gap: 13px; height: 28px; flex: none; padding-left: 10px; padding-bottom: 4px; white-space: nowrap; }
.bookmarks a { display: flex; align-items: center; gap: 5px; }
.bm-more { margin-left: auto; width: 36px; }

.view { flex: 1; min-height: 0; display: grid; grid-template: 1fr 12px / minmax(0, 1fr) 12px; background: #1d1e20; }
.site { display: flex; flex-direction: column; overflow: hidden; padding-top: 10px; background: linear-gradient(#2a2e31, #2a2e31) 0 0 / 870px 100% no-repeat #1a1b1c; }
.vbar { grid-area: 1 / 2 / 3 / 3; }
.vbar i { display: block; height: 53%; background: #2b2c2e; }
.hbar i { display: block; height: 12px; width: 74%; margin-left: 73px; background: #2b2c2e; }
.site-head { display: flex; justify-content: space-between; height: 90px; flex: none; background: #191a1c; }
.brand { width: 140px; padding: 6px 0; overflow: hidden; display: flex; flex-direction: column; }
.logo, .tagline { display: flex; justify-content: flex-end; white-space: nowrap; }
.logo { font: 900 30px/34px "Lato", sans-serif; color: #f4f6f8; text-shadow: 0 0 6px #bbb; padding-right: 18px; }
.tagline { font: bold 13px/32px "Liberation Sans Narrow", "PT Sans Narrow", "Lato", sans-serif; color: #6c0; padding-right: 48px; }
.social { width: 100px; flex: none; display: flex; gap: 4px; padding-top: 10px; overflow: hidden; }
.like { width: 80px; height: 20px; flex: none; display: flex; align-items: center; gap: 4px; padding-left: 8px; border-radius: 3px; background: #0a56b8; color: #fff; font: 11px/18px "Liberation Sans", sans-serif; }
.tw { width: 28px; height: 20px; flex: none; padding-left: 7px; border-radius: 3px; background: #1b6ea8; }

.site-body { flex: 1; display: grid; grid-template-columns: minmax(0, 643px) 185px; column-gap: 5px; padding-left: 115px; }
.content { background: #222325; font: 12px/14px "Liberation Sans", Arial, sans-serif; color: #e8e6e3; }
.sports { height: 32px; display: grid; grid-template-columns: repeat(10, 1fr); gap: 2px; padding: 2px; border: 2px solid #363636; border-top-color: #4d4d4d; border-left-color: #4d4d4d; }
.sports a { display: flex; align-items: center; justify-content: center; border: 1px solid #4d4d4d; border-top-color: #363636; border-left-color: #363636; }
.zone { height: 24px; margin: 7px 2px 2px; padding-left: 1px; border: 1px solid #4d5a27; font-size: 13px; line-height: 22px; font-weight: bold; color: #2d7cff; }
.date { height: 46px; margin: 0 2px; padding-top: 14px; display: flex; justify-content: center; gap: 4px; border: 1px solid #4d5a27; border-radius: 3px; background: #2a2e31; line-height: 28px; color: #fff; }
.day { font-size: 18px; margin-right: 1px; }
.streams { padding: 30px 10px; }
.streams h1 { font-size: 18px; line-height: 20px; margin-bottom: 15px; }
.streams p { margin-bottom: 14px; }

.chat { height: 731px; background: #333a22; overflow: hidden; }
.chat-btns { display: flex; gap: 4px; padding: 5px 3px; white-space: nowrap; }
.chat-btns button { height: 24px; flex: none; border: 2px solid #4d4d4d; border-right-color: #333; border-bottom-color: #333; background: #191a1c; font-weight: bold; font-size: 14px; line-height: 20px; }
.hide { width: 82px; color: #f22; }
.show { width: 88px; color: #6f6; }
.chip { width: 12px; height: 20px; flex: none; margin-left: -1px; margin-top: -2px; border-radius: 3px; background: #1b6ea8; }
.rules { width: 220px; height: 140px; margin-left: 1px; padding: 6px 3px; border: 3px double #55584a; color: #a9b58c; white-space: nowrap; }
.rules h2 { font: 500 11px/14px "Roboto", sans-serif; color: #6f6; }
.rules ol { margin-top: 11px; padding-left: 40px; font: 10px/18px "Liberation Serif", "Times New Roman", serif; color: #b8c49a; }

/* impress */
.impress { display: flex; flex-direction: column; min-width: 0; background: #0e0f11; color: #999; }
.titlebar { display: grid; grid-template-columns: 1fr auto; align-items: center; height: 34px; flex: none; background: #000; }
.titlebar h2 { grid-area: 1 / 1 / 2 / 3; text-align: center; font-size: 14px; font-weight: 500; color: #5c5f62; }
.titlebar .wm { grid-area: 1 / 2; }
.menubar { display: flex; gap: 17px; height: 25px; flex: none; padding-left: 8px; background: #000; color: #53575a; }
.menubar button { padding-bottom: 2px; }
.toolbar { display: flex; align-items: center; height: 39px; flex: none; padding: 0 2px 0 3px; }
.grip { width: 3px; height: 24px; flex: none; background: repeating-linear-gradient(#555 0 3px, transparent 3px 4px); }
.toolbar > .grip { margin-right: 5px; }
.tb { position: relative; width: 33px; height: 35px; flex: none; display: flex; align-items: center; justify-content: center; }
.tb svg { width: 24px; height: 24px; }
.tb.wide { width: 41px; }
.tb.wide svg { width: 30px; }
.tb.on { background: #1a1b1d; border-radius: 3px; }
.abc { position: absolute; left: 5px; top: 4px; font-size: 13px; line-height: 16px; color: #555; }
.car { width: 11px; height: 33px; flex: none; display: flex; align-items: center; justify-content: center; }
.car::before { content: ""; border: 3px solid transparent; border-top: 4px solid #fff; border-bottom: 0; }
.dim::before { border-top-color: #555; }
.sep { width: 1px; height: 33px; flex: none; margin: 0 4px 0 3px; background: #2a2b2d; }
.more-end { display: flex; align-items: center; gap: 4px; margin-left: auto; margin-right: 41px; }
.more { width: 12px; flex: none; color: #fff; font-size: 15px; font-weight: bold; }
.last { margin-left: auto; }

.work { flex: 1; min-height: 0; display: grid; grid-template: minmax(0, 1fr) 16px / 8px minmax(0, 1fr) 16px; border-bottom: 1px solid #555; }
.split { grid-row: 1 / 3; border-right: 2px solid #55575a; display: flex; align-items: center; }
.split i { width: 6px; height: 72px; background: #999; }
.split i::before { content: ""; display: block; margin-top: 32px; border: 4px solid transparent; border-left: 5px solid #111; border-right: 0; }
.canvas { display: flex; align-items: center; padding: 0 19px 4px 14px; min-width: 0; }
.slide { flex: 1; min-width: 0; aspect-ratio: 903 / 508; border: 1px solid #888; border-bottom: 0; background: linear-gradient(#4cb5ac, #4cb5ac) 0 100% / 100% 10px no-repeat #fff; padding: 53px 0 0 39px; color: #695d46; font: 23px/51px "Open Sans", sans-serif; white-space: nowrap; }
.slide h1 { font: bold 45px/58px "PT Sans Narrow", "Liberation Sans Narrow", "Open Sans", sans-serif; color: #ef6c00; margin-bottom: 15px; }
.slide ul { list-style: none; padding-left: 45px; }
.lo-vbar { background: #1a1b1d; padding: 69px 4px 64px; }
.lo-vbar i { display: block; height: 100%; border-radius: 4px; background: #5c5d5f; }
.lo-hbar { grid-column: 2; background: #1a1b1d; padding: 4px 310px 4px 311px; }
.lo-hbar i { display: block; height: 8px; border-radius: 4px; background: #5c5d5f; }

.status { height: 24px; flex: none; display: grid; grid-template-columns: 107px 227px 152px 23px 30px 202px 23px 144px 1fr; padding: 3px 0 2px; font-weight: 500; line-height: 19px; white-space: nowrap; }
.status > span { border-right: 1px solid #2a2b2d; padding-left: 10px; }
.status > .pos { display: flex; gap: 6px; }
.status b { font-weight: 500; }
.pos b:first-of-type { width: 47px; overflow: visible; }
.status > .ic { display: flex; align-items: center; padding-left: 6px; }
.status > .ctr { padding: 0; text-align: center; }
.status > .zoom { display: flex; align-items: center; gap: 6px; }
.zoom input { width: 98px; height: 12px; margin: 0; appearance: none; background: linear-gradient(#999, #999) 0 50% / 100% 2px no-repeat; }
.zoom input::-webkit-slider-thumb { appearance: none; width: 10px; height: 10px; border-radius: 5px; background: #eee; }
.status > .pct { border: 0; padding-left: 12px; }
```
